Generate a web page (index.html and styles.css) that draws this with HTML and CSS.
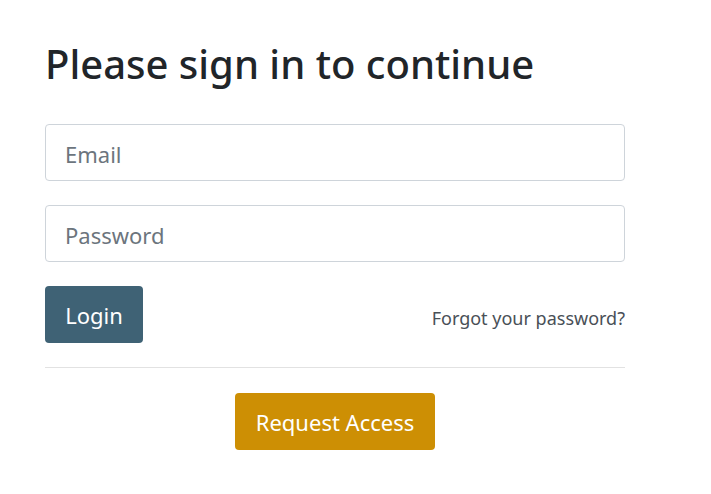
FILE: index.html
```html
<!DOCTYPE html>
<html>
<head>
<meta charset="utf-8">
<link rel="stylesheet" href="styles.css">
</head>
<body>
<main class="page">
  <h1 class="title">Please sign in to continue</h1>
  <form class="form">
    <input class="field" type="email" placeholder="Email">
    <input class="field" type="password" placeholder="Password">
    <div class="actions">
      <button class="btn btn-login" type="button">Login</button>
      <a class="forgot" href="#">Forgot your password?</a>
    </div>
  </form>
  <hr class="divider">
  <div class="request">
    <button class="btn btn-request" type="button">Request Access</button>
  </div>
</main>
</body>
</html>
```
FILE: styles.css
```css
* { box-sizing: border-box; }
html, body { margin: 0; padding: 0; background: #fff; }
body {
  font-family: "Noto Sans", "Open Sans", sans-serif;
  color: #212529;
}
.page {
  width: 580px;
  margin-left: 45px;
  padding-top: 40px;
}
.title {
  margin: 0 0 36px;
  font-size: 40px;
  font-weight: 500;
  line-height: 48px;
}
.form {
  display: flex;
  flex-direction: column;
  gap: 24px;
}
.field {
  height: 57px;
  width: 100%;
  padding: 0 19px;
  padding-top: 2px;
  border: 1px solid #ced4da;
  border-radius: 4px;
  font-family: inherit;
  font-size: 22px;
  color: #495057;
}
.field::placeholder { color: #6c757d; }
.actions {
  display: flex;
  justify-content: space-between;
  align-items: center;
}
.btn {
  height: 57px;
  border: none;
  border-radius: 4px;
  font-family: inherit;
  font-size: 22px;
  color: #fff;
  padding: 0 18px;
}
.btn-login { background: #3f6275; width: 98px; }
.forgot {
  color: #495057;
  text-decoration: none;
  font-size: 18px;
  margin-top: 6px;
}
.divider {
  margin: 24px 0 25px;
  border: 0;
  border-top: 1px solid #e2e2e2;
}
.request { display: flex; justify-content: center; }
.btn-request { background: #cd8f04; width: 200px; }
```
